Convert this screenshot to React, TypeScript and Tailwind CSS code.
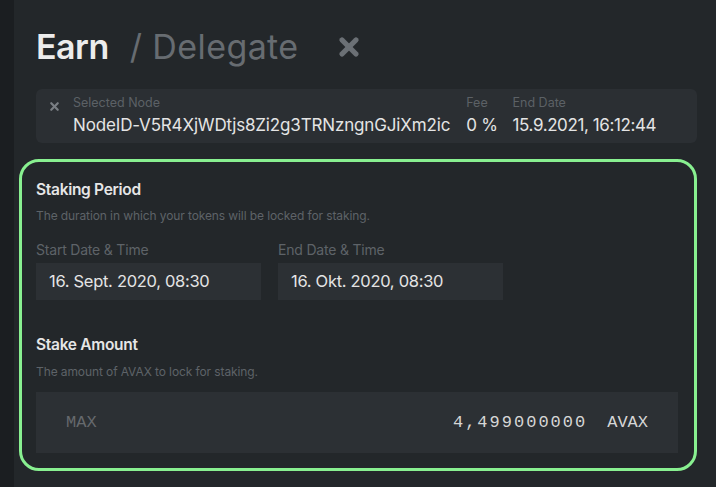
import { X } from "lucide-react";

const sans = { fontFamily: "Inter, 'Noto Sans', sans-serif" };

const DateField = ({ label, value }: { label: string; value: string }) => (
  <div className="w-[225px]">
    <p className="text-[14px] leading-[20px] text-[#5e6368] tracking-[-0.2px]">{label}</p>
    <div className="mt-[3px] h-[37px] bg-[#2c3034] flex items-center px-[13px] text-[16.5px] text-[#e4e4e4] tracking-[-0.3px]">
      {value}
    </div>
  </div>
);

export default function App() {
  return (
    <div className="flex w-[716px] h-[487px] overflow-hidden bg-[#23272a]" style={sans}>
      <div className="w-[14px] shrink-0 bg-[#1b1e21]" />
      <main className="flex-1 pl-[5px] pr-[19px]">
        {/* Title */}
        <div className="ml-[17px] flex items-center h-[63px] pt-[30px]">
          <h1 className="text-[34px] font-semibold text-[#ececec] tracking-[-0.5px]">Earn</h1>
          <span className="ml-[21px] text-[34px] text-[#676c71] tracking-[0.4px]">/ Delegate</span>
          <X className="ml-[36px] w-[28px] h-[28px] text-[#6b7075]" strokeWidth={4.5} />
        </div>

        {/* Selected node */}
        <div className="ml-[17px] mt-[26px] h-[54px] rounded-[6px] bg-[#2b2f33] flex items-start pt-[6px] pl-[12px]">
          <X className="mt-[5px] w-[13px] h-[13px] text-[#7a7f84]" strokeWidth={4} />
          <div className="ml-[12px]">
            <p className="text-[12.5px] leading-[16px] text-[#5c6166]">Selected Node</p>
            <p className="mt-[3px] text-[17px] leading-[22px] text-[#e4e4e4] tracking-[-0.15px]">
              NodeID-V5R4XjWDtjs8Zi2g3TRNzngnGJiXm2ic
            </p>
          </div>
          <div className="ml-[16px]">
            <p className="text-[12.5px] leading-[16px] text-[#5c6166]">Fee</p>
            <p className="mt-[3px] text-[17px] leading-[22px] text-[#e4e4e4] tracking-[-0.3px]">0 %</p>
          </div>
          <div className="ml-[15px]">
            <p className="text-[12.5px] leading-[16px] text-[#5c6166]">End Date</p>
            <p className="mt-[3px] text-[17px] leading-[22px] text-[#e4e4e4] tracking-[-0.4px]">15.9.2021, 16:12:44</p>
          </div>
        </div>

        {/* Staking form */}
        <section className="mt-[16px] h-[312px] rounded-[20px] border-[3px] border-[#88f090] px-[14px] pt-[17px] pr-[16px]">
          <h2 className="text-[15.5px] leading-[22px] font-semibold text-[#e6e6e6] tracking-[-0.3px]">Staking Period</h2>
          <p className="mt-[7px] text-[12px] leading-[16px] text-[#5e6368] tracking-[-0.1px]">
            The duration in which your tokens will be locked for staking.
          </p>
          <div className="mt-[16px] flex gap-[17px]">
            <DateField label="Start Date & Time" value="16. Sept. 2020, 08:30" />
            <DateField label="End Date & Time" value="16. Okt. 2020, 08:30" />
          </div>

          <h2 className="mt-[34px] text-[15.5px] leading-[22px] font-semibold text-[#e6e6e6] tracking-[-0.3px]">Stake Amount</h2>
          <p className="mt-[8px] text-[12px] leading-[16px] text-[#5e6368] tracking-[-0.1px]">
            The amount of AVAX to lock for staking.
          </p>
          <div
            className="mt-[12px] h-[61px] bg-[#2c3034] flex items-center pl-[30px] pr-[30px] text-[17px]"
            style={{ fontFamily: "'Liberation Mono', monospace" }}
          >
            <span className="text-[#66696d]">MAX</span>
            <span className="ml-auto text-[#d6d6d6] tracking-[2px]">4,499000000</span>
            <span className="ml-[20px] text-[#d6d6d6]">AVAX</span>
          </div>
        </section>
      </main>
    </div>
  );
}
